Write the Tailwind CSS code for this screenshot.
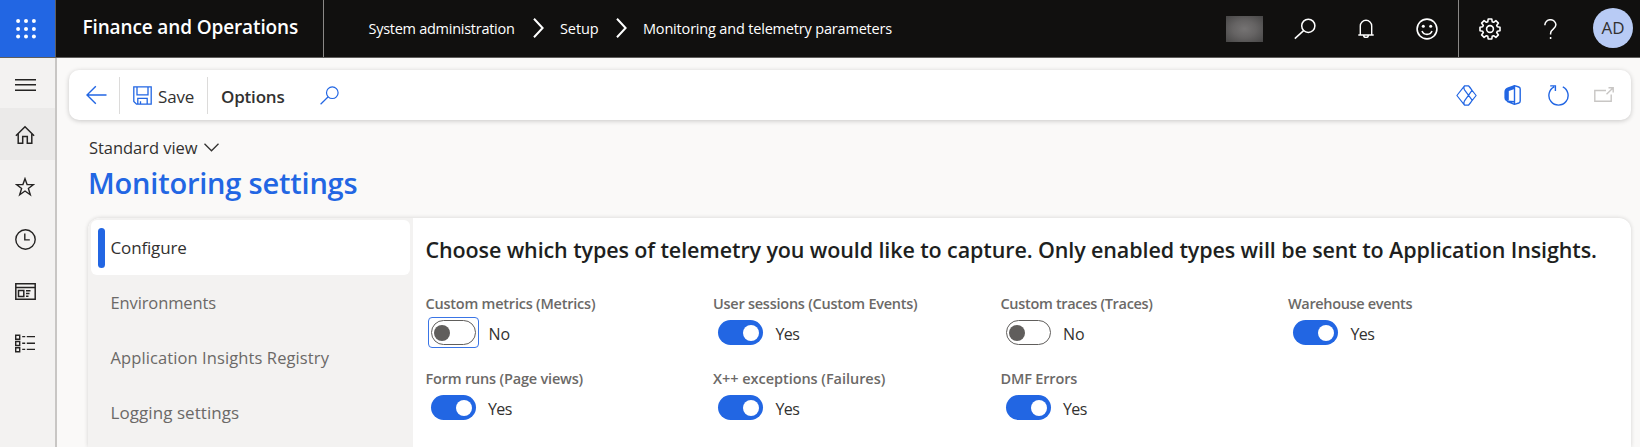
<!DOCTYPE html>
<html lang="en">
<head>
<meta charset="utf-8">
<title>Monitoring and telemetry parameters</title>
<script src="https://cdn.jsdelivr.net/npm/@tailwindcss/browser@4"></script>
</head>
<body class="flex h-[447px] w-[1640px] flex-col overflow-hidden bg-[#faf9f8] font-['Open_Sans','Noto_Sans',sans-serif] text-[#323130]">

<header class="flex h-[58px] shrink-0 border-b border-[#605e5c] bg-[#11100f] text-white">
  <button class="flex w-[56px] items-center justify-center border-r border-[#605e5c] bg-[#2266e3] pr-1">
    <svg class="h-5 w-5" viewBox="0 0 20 20" fill="#fff"><circle cx="2.1" cy="2.1" r="2"/><circle cx="10" cy="2.1" r="2"/><circle cx="17.9" cy="2.1" r="2"/><circle cx="2.1" cy="10" r="2"/><circle cx="10" cy="10" r="2"/><circle cx="17.9" cy="10" r="2"/><circle cx="2.1" cy="17.4" r="2"/><circle cx="10" cy="17.4" r="2"/><circle cx="17.9" cy="17.4" r="2"/></svg>
  </button>
  <div class="flex w-[268px] items-start border-r border-[#8a8886] pl-[26.5px] pt-[13px] text-[19px] font-semibold leading-[29px] tracking-[-0.13px] whitespace-nowrap">Finance and Operations</div>
  <nav class="flex items-start pl-[44.5px] pt-[16px] text-[14.5px] leading-[25px] whitespace-nowrap">
    <span class="w-[164.5px] tracking-[-0.27px]">System administration</span>
    <svg class="mt-[2px] h-5 w-[11px]" viewBox="0 0 11 20" fill="none" stroke="#fff" stroke-width="2"><path d="M1 .8 9.6 10 1 19.2"/></svg>
    <span class="ml-4 w-[56px] tracking-[-0.1px]">Setup</span>
    <svg class="mt-[2px] h-5 w-[11px]" viewBox="0 0 11 20" fill="none" stroke="#fff" stroke-width="2"><path d="M1 .8 9.6 10 1 19.2"/></svg>
    <span class="ml-4 tracking-[-0.18px]">Monitoring and telemetry parameters</span>
  </nav>
  <div class="ml-auto flex">
    <div class="mt-4 h-[26px] w-[37px] bg-[radial-gradient(ellipse,#757373_0%,#656363_45%,#464545_100%)]"></div>
    <svg class="ml-[31px] mt-[18px] h-[22px] w-[22px]" viewBox="0 0 22 22" fill="none" stroke="#fff" stroke-width="1.5"><circle cx="14.3" cy="7.8" r="6.6"/><path d="M9.6 12.6.8 20.6"/></svg>
    <svg class="ml-[42px] mt-[19px] h-5 w-4" viewBox="0 0 16 20" fill="none" stroke="#fff" stroke-width="1.4"><path d="M.3 16h15.4M2.3 16V7a5.7 5.7 0 0 1 11.4 0v9M5.6 16.2a2.4 2.2 0 0 0 4.8 0"/></svg>
    <svg class="ml-[42px] mt-[18px] h-[22px] w-[22px]" viewBox="0 0 22 22" fill="none" stroke="#fff" stroke-width="1.6"><circle cx="11" cy="11" r="9.9"/><path d="M6 13a5.4 5.4 0 0 0 10 0"/><circle cx="7.3" cy="8.2" r="1.5" fill="#fff" stroke="none"/><circle cx="14.7" cy="8.2" r="1.5" fill="#fff" stroke="none"/></svg>
    <div class="ml-5 w-px bg-[#8a8886]"></div>
    <svg class="ml-5 mt-[18px] h-[22px] w-[22px]" viewBox="0 0 22 22" fill="none" stroke="#fff" stroke-width="1.6" stroke-linejoin="round"><path d="M9.2 1h3.6l.4 2.7 1.4.6 2.3-1.7 2.5 2.5-1.7 2.3.6 1.4 2.7.4v3.6l-2.7.4-.6 1.4 1.7 2.3-2.5 2.5-2.3-1.7-1.4.6-.4 2.7H9.2l-.4-2.7-1.4-.6-2.3 1.7-2.5-2.5 1.7-2.3-.6-1.4L1 12.8V9.2l2.7-.4.6-1.4-1.7-2.3 2.5-2.5 2.3 1.7 1.4-.6z"/><circle cx="11" cy="11" r="3.4"/></svg>
    <svg class="ml-[43px] mt-[19px] h-5 w-[13px]" viewBox="0 0 13 20" fill="none" stroke="#fff" stroke-width="1.5"><path d="M.9 6.2V5.8A5.4 5 0 0 1 11.9 5.8C11.9 10 6.6 10.2 6.6 14.2V15.5M6.6 18v2"/></svg>
    <div class="ml-[36px] mr-[7px] mt-[7.5px] flex h-10 w-10 items-center justify-center rounded-full bg-[#b8cbf5] text-[17px] text-[#323130]">AD</div>
  </div>
</header>

<div class="flex min-h-0 flex-1">
  <aside class="flex w-[57px] shrink-0 flex-col border-r-2 border-[#c8c6c4] bg-[#f3f2f1] text-[#252423]">
    <div class="flex h-[50px] items-center justify-center pr-1 pt-[3px]"><svg class="h-[14px] w-[21px]" viewBox="0 0 21 14" stroke="currentColor" stroke-width="1.4"><path d="M0 1.8h21M0 6.8h21M0 12.3h21"/></svg></div>
    <div class="flex h-[52px] items-center justify-center bg-[#ebeae9] pr-[5px] pt-px"><svg class="h-5 w-5" viewBox="0 0 20 20" fill="none" stroke="currentColor" stroke-width="1.5"><path d="M.9 10.8 10 1.7l9.1 9.1M3.2 8.7v9.6h4.5v-6.8h4.6v6.8h4.5V8.7"/></svg></div>
    <div class="flex h-[53px] items-center justify-center pr-[5px]"><svg class="h-5 w-5" viewBox="0 0 20 20" fill="none" stroke="currentColor" stroke-width="1.4"><path d="m10 1.7 2.1 5.9h6.4l-5.1 3.9 1.9 6.3-5.3-3.8-5.3 3.8 1.9-6.3-5.1-3.9h6.4z"/></svg></div>
    <div class="flex h-[52px] items-center justify-center pr-1"><svg class="h-[21px] w-[21px]" viewBox="0 0 21 21" fill="none" stroke="currentColor" stroke-width="1.4"><circle cx="10.5" cy="10.5" r="9.7"/><path d="M9.8 4.5v6.4h5"/></svg></div>
    <div class="flex h-[52px] items-center justify-center pr-1"><svg class="h-[17px] w-[21px]" viewBox="0 0 21 17" fill="none" stroke="currentColor" stroke-width="1.5"><path d="M.8.8h19.4v15.4H.8zM.8 4.5h19.4M3.5 7.5h5.3v6H3.5zM11 7.7h4.5M11 10.5h3.5M11 13.2h2.5"/></svg></div>
    <div class="flex h-[53px] items-center justify-center pr-[5px]"><svg class="h-[19px] w-5" viewBox="0 0 20 19" fill="none" stroke="currentColor" stroke-width="1.4"><path d="M.7 1.2h4v4h-4zM.7 7.5h4v4h-4zM.7 13.8h4v4h-4zM7.2 2.6h3M11.8 2.6H20M7.2 9.2h3M11.8 9.2H20M7.2 15.4h3M11.8 15.4H20"/></svg></div>
  </aside>

  <main class="flex min-w-0 flex-1 flex-col pl-3 pr-[9px] pt-3">
    <div class="flex h-[50px] shrink-0 items-center rounded-[10px] bg-white shadow-[0_1px_5px_rgba(0,0,0,0.2)]">
      <svg class="ml-[17px] h-5 w-[21px]" viewBox="0 0 21 20" fill="none" stroke="#2266e3" stroke-width="1.4"><path d="M1 10h19.5M9.8 1.2 1 10l8.8 8.8"/></svg>
      <div class="ml-3 h-[37px] w-px bg-[#dcdbda]"></div>
      <svg class="ml-[13px] h-[19px] w-[19px]" viewBox="0 0 19 19" fill="none" stroke="#2266e3" stroke-width="1.3"><path d="M.8.8h17.4v17.4H3.5L.8 15.5zM4 .8v8h11v-8M4.8 18v-5.7h9.4V18M7.5 18v-2.8"/></svg>
      <span class="ml-[6px] w-[49px] pt-[2px] text-[17px] leading-[25px] tracking-[-0.15px]">Save</span>
      <div class="h-[37px] w-px bg-[#dcdbda]"></div>
      <span class="ml-[13px] w-[99px] pt-[2px] text-[17px] font-semibold leading-[25px] tracking-[-0.2px]">Options</span>
      <svg class="h-[19px] w-[19px]" viewBox="0 0 19 19" fill="none" stroke="#2266e3" stroke-width="1.2"><circle cx="12.3" cy="6.7" r="5.8"/><path d="M8.2 10.8.6 18.2"/></svg>
      <div class="ml-auto flex items-center pr-[17px]">
        <svg class="h-[21px] w-[21px]" viewBox="0 0 21 21" fill="none" stroke="#2266e3" stroke-width="1.2" stroke-linejoin="round"><path d="M8.5.8.9 10.5l7.6 9.7h4l7.6-9.7L12.500.8zM8.5.8Q7.200 3 8.500 4.900l7.600 10.300M12.500.8q2 1.800 3.500 4.600L8.500 15.800Q7.200 18 8.500 20.200M16.100 15.200q-1.600 3.200-3.600 5"/></svg>
        <svg class="ml-[27px] h-5 w-[17px]" viewBox="0 0 17 20"><path fill="#2266e3" d="M10.5 0 3.5 2.4Q.4 3.7.4 7v6q0 2.5 2.200 3.300l2.200-1V5.900L10.500 4z"/><path fill="none" stroke="#2266e3" stroke-width="1.4" d="M10.5.7 14.800 2q1.400.5 1.400 2v12q0 1.500-1.400 2l-4.300 1.300zM10.500 19.300 3 16.300l7.500.4"/></svg>
        <svg class="ml-[27px] h-[21px] w-[21px]" viewBox="0 0 21 21" fill="none" stroke="#2266e3" stroke-width="1.4"><path d="M14.8 1.9A9.6 9.6 0 1 1 6.2 1.9M2.2.9h5.2v5.2"/></svg>
        <svg class="ml-[25px] h-4 w-5" viewBox="0 0 20 16" fill="none" stroke="#c8c6c4" stroke-width="1.4"><path d="M12 3.500H.8v10.700h16.400V7.500M12.500 7.200 19 .9M14.500.8h4.700v4.700"/></svg>
      </div>
    </div>

    <div class="mt-[15px] flex h-[25px] shrink-0 items-center pl-5">
      <span class="w-[115px] text-[16.5px] leading-[25px] tracking-[-0.04px] whitespace-nowrap">Standard view</span>
      <svg class="h-[9px] w-[15px]" viewBox="0 0 15 9" fill="none" stroke="#323130" stroke-width="1.3"><path d="M.5.8 7.5 7.8 14.5.8"/></svg>
    </div>
    <h1 class="mt-[3px] h-[40px] shrink-0 pl-[19px] text-[29px] font-semibold leading-[40px] tracking-[-0.2px] text-[#2266e3]">Monitoring settings</h1>

    <section class="ml-[19px] mt-[15px] flex min-h-0 flex-1 overflow-hidden rounded-t-xl bg-white shadow-[0_0_4px_rgba(0,0,0,0.16)]">
      <div class="w-[325px] shrink-0 bg-[#f3f2f1] px-[2.5px] pt-[2px] text-[17px] text-[#6b6967]">
        <div class="mr-px flex h-[55px] items-center rounded-md bg-white pl-[7.5px] text-[#323130]">
          <div class="h-10 w-[6.5px] rounded-full bg-[#2266e3]"></div>
          <span class="pl-[6px] tracking-[-0.15px]">Configure</span>
        </div>
        <div class="flex h-[55px] items-center pl-5 pt-[2px] text-[16.5px] tracking-[-0.12px]">Environments</div>
        <div class="flex h-[55px] items-center pl-5 pt-[2px] text-[16.5px] tracking-[0.1px]">Application Insights Registry</div>
        <div class="flex h-[55px] items-center pl-5 tracking-[0.06px]">Logging settings</div>
      </div>
      <div class="pl-[12.5px] pt-[16px]">
        <h2 class="h-[31px] text-[21.5px] font-semibold leading-[32px] tracking-[-0.11px] whitespace-nowrap text-[#201f1e]">Choose which types of telemetry you would like to capture. Only enabled types will be sent to Application Insights.</h2>
        <div class="grid auto-rows-[75px] grid-cols-[repeat(4,287.5px)] pt-[26px] text-[14.5px] font-semibold leading-[25px] whitespace-nowrap text-[#6b6967]">
          <div>
            <div class="tracking-[-0.22px]">Custom metrics (Metrics)</div>
            <div class="flex items-center pl-[2px] pt-px text-base leading-[25px] font-normal text-[#323130]">
              <div class="rounded-[4px] border border-[#3a75e6] p-[2px]"><div class="flex h-[25px] w-[45px] items-center rounded-full border border-[#605e5c] pl-[2px]"><div class="h-4 w-4 rounded-full bg-[#605e5c]"></div></div></div>
              <span class="pl-[10px] pt-[4px]">No</span>
            </div>
          </div>
          <div>
            <div class="tracking-[-0.25px]">User sessions (Custom Events)</div>
            <div class="flex items-center pl-[5px] pt-[2px] text-base leading-[25px] font-normal text-[#323130]">
              <div class="flex h-[25px] w-[45px] items-center justify-end rounded-full bg-[#2266e3] pr-1"><div class="h-4 w-4 rounded-full bg-white"></div></div>
              <span class="pl-[12.5px] pt-[4px] tracking-[-0.6px]">Yes</span>
            </div>
          </div>
          <div>
            <div class="tracking-[-0.32px]">Custom traces (Traces)</div>
            <div class="flex items-center pl-[5px] pt-[2px] text-base leading-[25px] font-normal text-[#323130]">
              <div class="flex h-[25px] w-[45px] items-center rounded-full border border-[#605e5c] pl-[2px]"><div class="h-4 w-4 rounded-full bg-[#605e5c]"></div></div>
              <span class="pl-[12.5px] pt-[4px]">No</span>
            </div>
          </div>
          <div>
            <div class="tracking-[-0.34px]">Warehouse events</div>
            <div class="flex items-center pl-[5px] pt-[2px] text-base leading-[25px] font-normal text-[#323130]">
              <div class="flex h-[25px] w-[45px] items-center justify-end rounded-full bg-[#2266e3] pr-1"><div class="h-4 w-4 rounded-full bg-white"></div></div>
              <span class="pl-[12.5px] pt-[4px] tracking-[-0.6px]">Yes</span>
            </div>
          </div>
          <div>
            <div class="tracking-[-0.19px]">Form runs (Page views)</div>
            <div class="flex items-center pl-[5px] pt-[2px] text-base leading-[25px] font-normal text-[#323130]">
              <div class="flex h-[25px] w-[45px] items-center justify-end rounded-full bg-[#2266e3] pr-1"><div class="h-4 w-4 rounded-full bg-white"></div></div>
              <span class="pl-[12.5px] pt-[4px] tracking-[-0.6px]">Yes</span>
            </div>
          </div>
          <div>
            <div class="tracking-[-0.04px]">X++ exceptions (Failures)</div>
            <div class="flex items-center pl-[5px] pt-[2px] text-base leading-[25px] font-normal text-[#323130]">
              <div class="flex h-[25px] w-[45px] items-center justify-end rounded-full bg-[#2266e3] pr-1"><div class="h-4 w-4 rounded-full bg-white"></div></div>
              <span class="pl-[12.5px] pt-[4px] tracking-[-0.6px]">Yes</span>
            </div>
          </div>
          <div>
            <div class="tracking-[-0.16px]">DMF Errors</div>
            <div class="flex items-center pl-[5px] pt-[2px] text-base leading-[25px] font-normal text-[#323130]">
              <div class="flex h-[25px] w-[45px] items-center justify-end rounded-full bg-[#2266e3] pr-1"><div class="h-4 w-4 rounded-full bg-white"></div></div>
              <span class="pl-[12.5px] pt-[4px] tracking-[-0.6px]">Yes</span>
            </div>
          </div>
        </div>
      </div>
    </section>
  </main>
</div>
</body>
</html>
